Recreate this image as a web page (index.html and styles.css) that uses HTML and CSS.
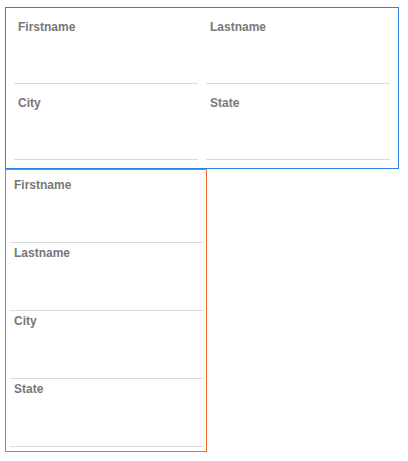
FILE: index.html
```html
<!DOCTYPE html>
<html lang="en">
<head>
<meta charset="utf-8">
<title>Forms</title>
<link rel="stylesheet" href="styles.css">
</head>
<body>
<div class="page">
  <form class="form form-grid">
    <div class="field"><label class="label">Firstname</label></div>
    <div class="field"><label class="label">Lastname</label></div>
    <div class="field"><label class="label">City</label></div>
    <div class="field"><label class="label">State</label></div>
  </form>
  <form class="form form-stack">
    <div class="field"><label class="label">Firstname</label></div>
    <div class="field"><label class="label">Lastname</label></div>
    <div class="field"><label class="label">City</label></div>
    <div class="field"><label class="label">State</label></div>
  </form>
</div>
</body>
</html>
```
FILE: styles.css
```css
html, body {
  margin: 0;
  background: #ffffff;
}
.page {
  padding: 7px 0 0 5px;
  font-family: "Liberation Sans", Arial, sans-serif;
}
.form {
  box-sizing: border-box;
  margin: 0;
}
.form-grid {
  width: 394px;
  border: 1px solid #2b80e6;
  display: grid;
  grid-template-columns: 184px 184px;
  column-gap: 8px;
  padding: 0 8px 8px 8px;
}
.form-stack {
  width: 202px;
  border: 1px solid #ef6a2c;
  display: flex;
  flex-direction: column;
  padding: 5px 3px 4px 4px;
}
.field {
  box-sizing: border-box;
  border-bottom: 1px solid #d9d9d9;
  padding: 0 4px;
}
.form-grid .field {
  height: 76px;
  padding-top: 12px;
}
.form-stack .field {
  height: 68px;
  padding-top: 3px;
}
.label {
  display: block;
  font-size: 12px;
  font-weight: bold;
  color: #787878;
}
```
